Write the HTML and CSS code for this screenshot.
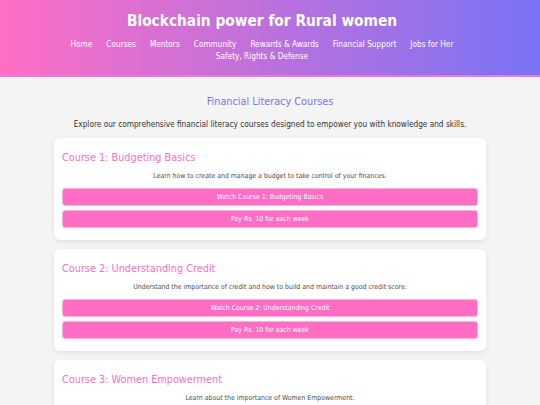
FILE: index.html
```html
<!DOCTYPE html>
<html lang="en">
<head>
<meta charset="utf-8">
<title>Blockchain power for Rural women</title>
<link rel="stylesheet" href="styles.css">
</head>
<body>
<header class="site-header">
  <h1 class="site-title">Blockchain power for Rural women</h1>
  <nav class="site-nav">
    <a href="#">Home</a>
    <a href="#">Courses</a>
    <a href="#">Mentors</a>
    <a href="#">Community</a>
    <a href="#">Rewards &amp; Awards</a>
    <a href="#">Financial Support</a>
    <a href="#">Jobs for Her</a>
    <a href="#">Safety, Rights &amp; Defense</a>
  </nav>
</header>
<main class="content">
  <section class="courses">
    <h2 class="section-title">Financial Literacy Courses</h2>
    <p class="section-intro">Explore our comprehensive financial literacy courses designed to empower you with knowledge and skills.</p>

    <article class="card">
      <h3 class="card-title">Course 1: Budgeting Basics</h3>
      <p class="card-text">Learn how to create and manage a budget to take control of your finances.</p>
      <button class="btn">Watch Course 1: Budgeting Basics</button>
      <button class="btn">Pay Rs. 10 for each week</button>
    </article>

    <article class="card">
      <h3 class="card-title">Course 2: Understanding Credit</h3>
      <p class="card-text">Understand the importance of credit and how to build and maintain a good credit score.</p>
      <button class="btn">Watch Course 2: Understanding Credit</button>
      <button class="btn">Pay Rs. 10 for each week</button>
    </article>

    <article class="card">
      <h3 class="card-title">Course 3: Women Empowerment</h3>
      <p class="card-text">Learn about the importance of Women Empowerment.</p>
      <button class="btn">Watch Course 3: Women Empowerment</button>
      <button class="btn">Pay Rs. 10 for each week</button>
    </article>
  </section>
</main>
</body>
</html>
```

FILE: styles.css
```css
* { box-sizing: border-box; }

body {
  margin: 0;
  background: #f4f4f4;
  font-family: "DejaVu Sans Condensed", "DejaVu Sans", sans-serif;
  font-stretch: condensed;
  color: #333;
}

.site-header {
  background: linear-gradient(to right, #ff6ec4, #7873f5);
  color: #fff;
  text-align: center;
  padding: 10px 68px 13px 52px;
  border-bottom: 2px solid #e879d6;
}

.site-title {
  margin: 0 0 6px;
  font-size: 15.3px;
  line-height: 22px;
  font-weight: bold;
}

.site-nav {
  display: flex;
  flex-wrap: wrap;
  justify-content: center;
  column-gap: 14px;
  font-size: 8.2px;
  line-height: 12px;
}

.site-nav a {
  color: #fff;
  text-decoration: none;
}

.content {
  padding: 16px 0 20px;
}

.courses {
  width: 80%;
  margin: 0 auto;
}

.section-title {
  margin: 0 0 7px;
  text-align: center;
  color: #7873f5;
  font-size: 10.8px;
  line-height: 18px;
  font-weight: normal;
}

.section-intro {
  margin: 0 0 8px;
  text-align: center;
  font-size: 8.2px;
  line-height: 12px;
}

.card {
  background: #fff;
  border-radius: 6px;
  box-shadow: 0 2px 5px rgba(0, 0, 0, 0.08);
  padding: 8px 8px 8px;
  margin-bottom: 9px;
}

.card-title {
  margin: 4px 0 4px;
  color: #ff6ec4;
  font-size: 10.8px;
  line-height: 16px;
  font-weight: normal;
}

.card-text {
  margin: 5px 0 7px;
  text-align: center;
  font-size: 6.9px;
  line-height: 10px;
  color: #4a4a4a;
}

.btn {
  display: block;
  width: 100%;
  height: 18px;
  margin: 0 0 4px;
  padding: 0;
  background: #ff6ec4;
  border: 1px solid #ffb0de;
  border-radius: 3px;
  color: #fff;
  font-family: inherit;
  font-stretch: condensed;
  font-size: 6.9px;
  line-height: 16px;
}
```
